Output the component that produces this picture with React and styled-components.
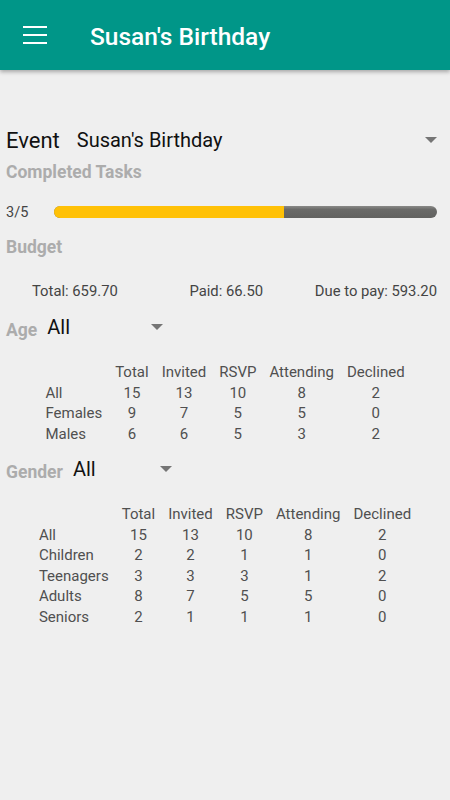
import React from "react";
import styled, { createGlobalStyle } from "styled-components";

const GlobalStyle = createGlobalStyle`
  html, body {
    margin: 0;
    padding: 0;
    background: #efefef;
    font-family: Roboto, "Noto Sans", sans-serif;
  }
`;

const Page = styled.div`
  width: 450px;
  min-height: 800px;
  background: #efefef;
`;

const AppBar = styled.header`
  height: 70px;
  background: #009688;
  display: flex;
  align-items: center;
  box-shadow: 0 2px 4px rgba(0, 0, 0, 0.3);
  position: relative;
`;

const MenuButton = styled.div`
  width: 24px;
  margin-left: 23px;
  display: flex;
  flex-direction: column;
  gap: 6px;
  span {
    display: block;
    height: 2px;
    background: #fff;
  }
`;

const Title = styled.h1`
  margin: 2px 0 0 43px;
  color: #fff;
  font-size: 24.5px;
  font-weight: 500;
`;

const Content = styled.main`
  padding: 55px 13px 0 6px;
`;

const Row = styled.div`
  display: flex;
  align-items: center;
  margin-top: ${(p) => p.$top || 0}px;
  height: ${(p) => p.$h || 30}px;
`;

const EventLabel = styled.span`
  font-size: 22px;
  color: #111;
`;

const Select = styled.div`
  display: flex;
  align-items: center;
  justify-content: space-between;
  margin-left: ${(p) => p.$gap}px;
  width: ${(p) => p.$width}px;
  flex: ${(p) => (p.$grow ? 1 : "none")};
  font-size: 20px;
  color: #111;
`;

const Arrow = styled.span`
  width: 0;
  height: 0;
  border-left: 6px solid transparent;
  border-right: 6px solid transparent;
  border-top: 6px solid #757575;
`;

const SectionTitle = styled.div`
  font-size: 17.5px;
  font-weight: 700;
  color: #acacac;
  position: relative;
  top: ${(p) => p.$drop || 0}px;
`;

const Fraction = styled.span`
  font-size: 14.5px;
  color: #444;
  width: 48px;
`;

const Track = styled.div`
  flex: 1;
  height: 12px;
  border-radius: 6px;
  overflow: hidden;
  display: flex;
  background: linear-gradient(#8a8a88 0%, #6a6a68 30%, #626260 100%);
`;

const Fill = styled.div`
  background: #ffc107;
  height: 100%;
`;

const BudgetRow = styled.div`
  display: flex;
  justify-content: space-between;
  padding-left: 26px;
  margin-top: 22px;
  font-size: 14.8px;
  color: #444;
`;

const Budget = styled.span`
  margin-left: ${(p) => p.$ml || 0}px;
`;

const Stats = styled.div`
  display: grid;
  grid-template-columns: repeat(6, auto);
  justify-content: center;
  column-gap: 13px;
  margin-top: ${(p) => p.$top}px;
  font-size: 15px;
  line-height: 20.5px;
  color: #505050;
  padding-left: 7px;
`;

const Cell = styled.span`
  text-align: ${(p) => (p.$left ? "left" : "center")};
`;

const tasks = { done: 3, total: 5 };
const columns = ["Total", "Invited", "RSVP", "Attending", "Declined"];

const ageRows = [
  ["All", 15, 13, 10, 8, 2],
  ["Females", 9, 7, 5, 5, 0],
  ["Males", 6, 6, 5, 3, 2],
];

const genderRows = [
  ["All", 15, 13, 10, 8, 2],
  ["Children", 2, 2, 1, 1, 0],
  ["Teenagers", 3, 3, 3, 1, 2],
  ["Adults", 8, 7, 5, 5, 0],
  ["Seniors", 2, 1, 1, 1, 0],
];

const StatsTable = ({ rows, top }) => (
  <Stats $top={top}>
    <Cell />
    {columns.map((c) => (
      <Cell key={c}>{c}</Cell>
    ))}
    {rows.map((r) =>
      r.map((v, i) => (
        <Cell key={r[0] + i} $left={i === 0}>
          {v}
        </Cell>
      ))
    )}
  </Stats>
);

const App = () => {
  return (
    <Page>
      <GlobalStyle />
      <AppBar>
        <MenuButton>
          <span />
          <span />
          <span />
        </MenuButton>
        <Title>Susan's Birthday</Title>
      </AppBar>
      <Content>
        <Row $h={30}>
          <EventLabel>Event</EventLabel>
          <Select $gap={17} $grow>
            Susan's Birthday
            <Arrow />
          </Select>
        </Row>
        <Row $h={26} $top={4}>
          <SectionTitle>Completed Tasks</SectionTitle>
        </Row>
        <Row $h={26} $top={14}>
          <Fraction>
            {tasks.done}/{tasks.total}
          </Fraction>
          <Track>
            <Fill style={{ width: `${(tasks.done / tasks.total) * 100}%` }} />
          </Track>
        </Row>
        <Row $h={26} $top={9}>
          <SectionTitle>Budget</SectionTitle>
        </Row>
        <BudgetRow>
          <Budget>Total: 659.70</Budget>
          <Budget $ml={20}>Paid: 66.50</Budget>
          <Budget>Due to pay: 593.20</Budget>
        </BudgetRow>
        <Row $h={30} $top={12}>
          <SectionTitle $drop={3}>Age</SectionTitle>
          <Select $gap={10} $width={116}>
            All
            <Arrow />
          </Select>
        </Row>
        <StatsTable rows={ageRows} top={20} />
        <Row $h={30} $top={10}>
          <SectionTitle $drop={3}>Gender</SectionTitle>
          <Select $gap={10} $width={99}>
            All
            <Arrow />
          </Select>
        </Row>
        <StatsTable rows={genderRows} top={20} />
      </Content>
    </Page>
  );
};

export default App;
